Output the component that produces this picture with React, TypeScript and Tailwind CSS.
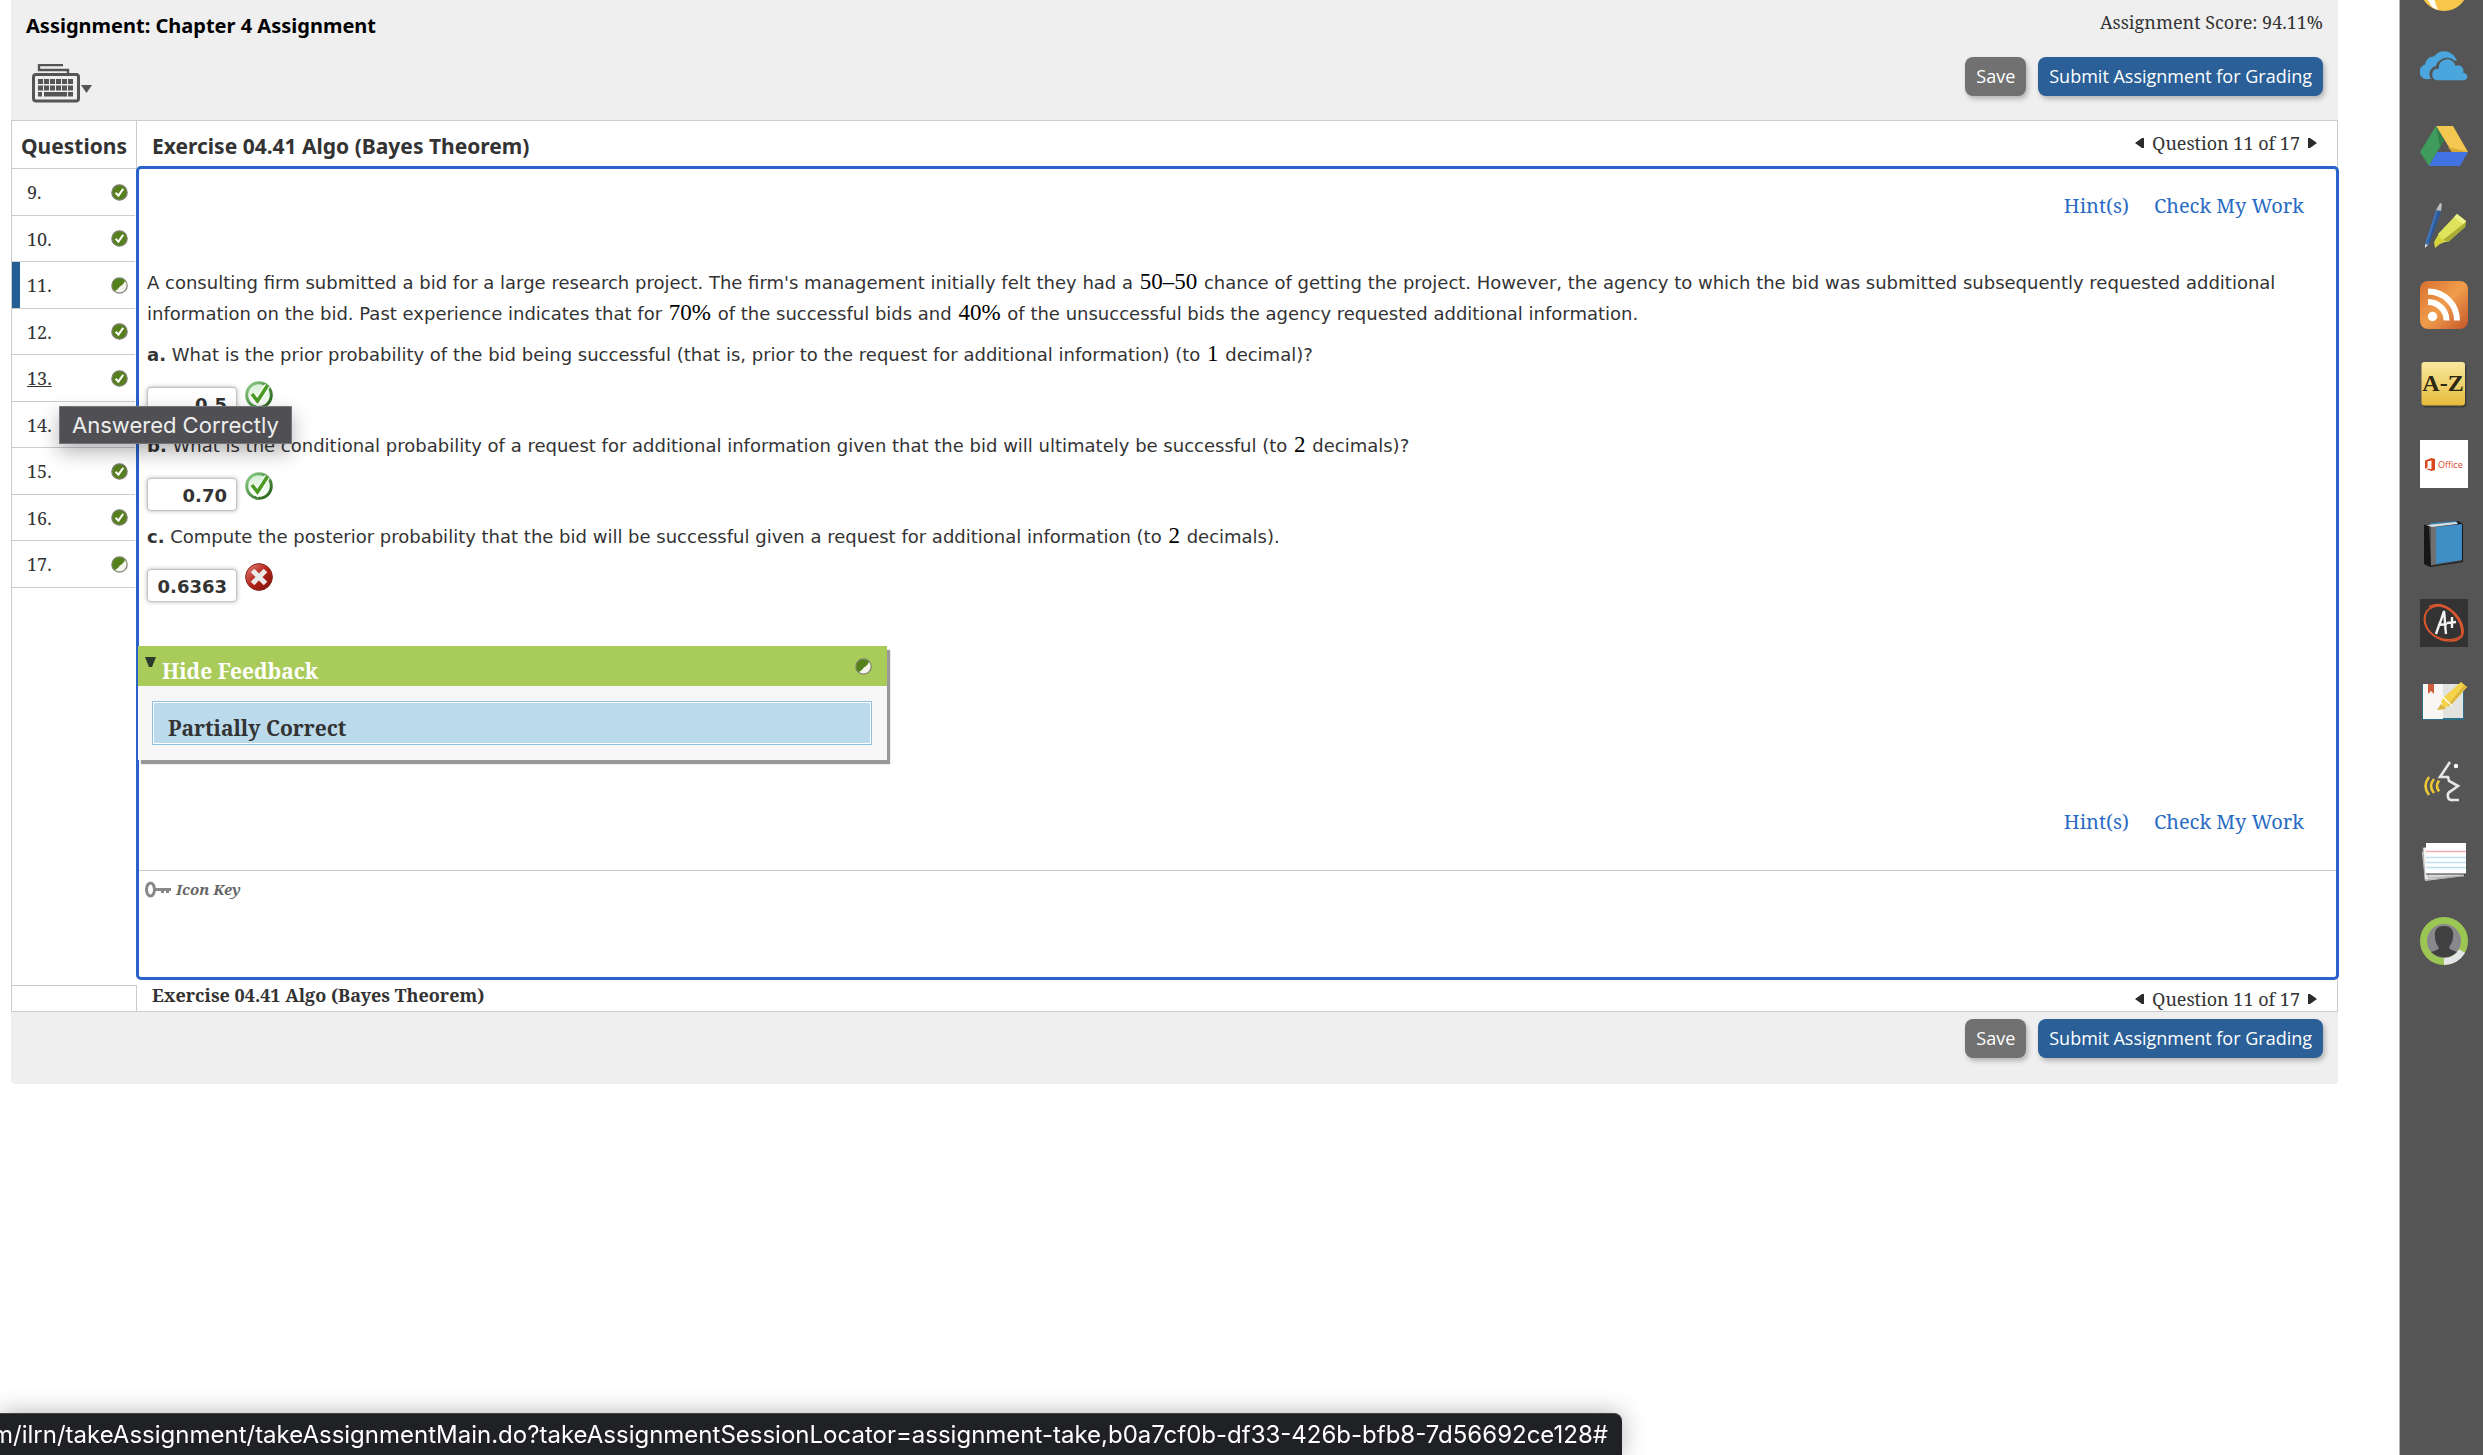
import React, { useState } from "react";

type Status = "correct" | "partial";

interface Question {
  number: number;
  status: Status;
}

const questions: Question[] = [
  { number: 9, status: "correct" },
  { number: 10, status: "correct" },
  { number: 11, status: "partial" },
  { number: 12, status: "correct" },
  { number: 13, status: "correct" },
  { number: 14, status: "correct" },
  { number: 15, status: "correct" },
  { number: 16, status: "correct" },
  { number: 17, status: "partial" },
];

const CURRENT = 11;
const HOVERED = 13;

function StatusIcon({ status }: { status: Status }) {
  return (
    <svg viewBox="0 0 17 17" className="w-[17px] h-[17px] shrink-0">
      <circle cx="8.5" cy="8.5" r="7.7" fill={status === "correct" ? "#55801c" : "#f4f6ee"} stroke="#7d7f72" strokeWidth="1.2" />
      {status === "correct" ? (
        <path d="M4.6 8.8 7.4 11.6 12.2 4.8" fill="none" stroke="#fff" strokeWidth="2" />
      ) : (
        <path d="M3 13.6A7.3 7.3 0 0 1 14 3.6C12.6 8.6 8.6 9 7.8 11 6.4 11.6 4.6 15 3 13.6Z" fill="#55801c" />
      )}
    </svg>
  );
}

function CorrectMark() {
  return (
    <svg viewBox="0 0 28 28" className="w-7 h-7">
      <defs>
        <linearGradient id="ring" x1="0" y1="0" x2="1" y2="1">
          <stop offset="0" stopColor="#8fd08a" />
          <stop offset="1" stopColor="#1d5c10" />
        </linearGradient>
        <linearGradient id="face" x1="0" y1="0" x2="0" y2="1">
          <stop offset="0" stopColor="#d3eed3" />
          <stop offset="1" stopColor="#fff" />
        </linearGradient>
      </defs>
      <circle cx="14" cy="14" r="12.3" fill="url(#face)" stroke="url(#ring)" strokeWidth="3" />
      <path d="M7 13.5 12.5 20.5 22.5 4.5" fill="none" stroke="#fff" strokeWidth="6" />
      <path d="M7 13 12.5 20 22.5 4.5" fill="none" stroke="#4a9a22" strokeWidth="3.6" />
    </svg>
  );
}

function IncorrectMark() {
  return (
    <svg viewBox="0 0 28 28" className="w-7 h-7">
      <defs>
        <linearGradient id="red" x1="0" y1="0" x2="1" y2="1">
          <stop offset="0" stopColor="#e58a80" />
          <stop offset="0.5" stopColor="#b42318" />
          <stop offset="1" stopColor="#7c120c" />
        </linearGradient>
      </defs>
      <circle cx="14" cy="14" r="13.4" fill="url(#red)" stroke="#8d2a22" strokeWidth="1" />
      <path d="M7.5 7.5 20.5 20.5M20.5 7.5 7.5 20.5" stroke="#eceae8" strokeWidth="5" />
    </svg>
  );
}

function KeyboardIcon() {
  return (
    <svg viewBox="0 0 61 39" className="w-[61px] h-[39px]">
      <path d="M31 1H7V6H36V10" fill="none" stroke="#555" strokeWidth="2.4" />
      <rect x="1.5" y="10.5" width="45" height="26.5" rx="2.5" fill="#efefef" stroke="#555" strokeWidth="3" />
      <g fill="#555">
        {[6, 12, 18, 24, 30, 36].map((x) => (
          <rect key={x} x={x} y="15" width="5" height="5" />
        ))}
        {[6, 12, 18, 24, 30, 36].map((x) => (
          <rect key={x} x={x} y="21.5" width="5" height="5" />
        ))}
        <rect x="6" y="28" width="4" height="4.5" />
        <rect x="12" y="28" width="23" height="4.5" />
        <rect x="36" y="28" width="5" height="4.5" />
        <path d="M49 21H60L54.5 29Z" />
      </g>
    </svg>
  );
}

function ActionButtons() {
  return (
    <div className="flex gap-3 font-['Open_Sans',sans-serif] text-lg leading-[39px] text-white">
      <button className="rounded-lg bg-[#717171] px-[11px] shadow-[2px_3px_5px_rgba(0,0,0,0.25)]">Save</button>
      <button className="rounded-lg bg-[#2a5f98] px-[11px] shadow-[2px_3px_5px_rgba(0,0,0,0.25)]">
        Submit Assignment for Grading
      </button>
    </div>
  );
}

function Pager() {
  return (
    <nav className="flex items-center gap-2 pr-5 text-lg leading-6 text-[#333]">
      <button aria-label="Previous question">
        <svg viewBox="0 0 9 10" className="w-[9px] h-[10px]">
          <path d="M9 0V10H7L0 5 7 0Z" fill="#2b2b2b" />
        </svg>
      </button>
      <span>Question 11 of 17</span>
      <button aria-label="Next question">
        <svg viewBox="0 0 9 10" className="w-[9px] h-[10px]">
          <path d="M0 0V10H2L9 5 2 0Z" fill="#2b2b2b" />
        </svg>
      </button>
    </nav>
  );
}

function HintLinks() {
  return (
    <div className="flex justify-end gap-[25px] pr-8 text-xl leading-7 text-[#2a6bc4]">
      <a href="#hints">Hint(s)</a>
      <a href="#check">Check My Work</a>
    </div>
  );
}

function Num({ children }: { children: React.ReactNode }) {
  return (
    <span className="px-px font-['Liberation_Serif',serif] text-[23px] leading-none text-black">{children}</span>
  );
}

interface PartProps {
  letter: string;
  value: string;
  correct: boolean;
  children: React.ReactNode;
}

function Part({ letter, value, correct, children }: PartProps) {
  const [answer, setAnswer] = useState(value);

  return (
    <div className="mt-[10px]">
      <label htmlFor={`part-${letter}`} className="block">
        <b>{letter}.</b> {children}
      </label>
      <div className="mt-[11px] flex items-start gap-2">
        <input
          id={`part-${letter}`}
          value={answer}
          onChange={(e) => setAnswer(e.target.value)}
          className="mt-[6px] h-[33px] w-[90px] rounded-[4px] border border-[#c4c4c4] bg-white pr-[9px] pt-[2px] text-right font-bold shadow-[0_0_4px_rgba(0,0,0,0.3)]"
        />
        {correct ? <CorrectMark /> : <IncorrectMark />}
      </div>
    </div>
  );
}

function Feedback() {
  const [open, setOpen] = useState(true);

  return (
    <section className="-ml-[9px] mt-11 w-[749px] bg-[#f7f7f7] font-['Noto_Serif','DejaVu_Serif_Condensed',serif] text-[21px] font-bold shadow-[3px_4px_1px_#999]">
      <div className="flex h-10 items-center justify-between bg-[#a9cb5a] pl-[7px] pr-[15px]">
        <button onClick={() => setOpen(!open)} className="flex items-start gap-[6px] pt-[10px] leading-8 text-white">
          <svg viewBox="0 0 11 10" className="mt-[2px] w-[11px] h-[10px]">
            <path d="M0 0H11L7 10H4Z" fill="#2b3a2b" />
          </svg>
          {open ? "Hide Feedback" : "Show Feedback"}
        </button>
        <StatusIcon status="partial" />
      </div>
      {open && (
        <div className="p-[15px] pl-[14px]">
          <div className="border border-[#8fc0de] bg-white p-px">
            <p className="h-10 bg-[#bbdaeb] pl-[14px] pt-[9px] leading-8">Partially Correct</p>
          </div>
        </div>
      )}
    </section>
  );
}

const dockIcons: { name: string; art: React.ReactNode }[] = [
  {
    name: "Reader",
    art: (
      <>
        <circle cx="24" cy="24" r="24" fill="#f7c64a" />
        <path d="M3 26C6 36 10 40 12 44L18 47C15 40 13 34 13 26Z" fill="#fff" />
      </>
    ),
  },
  {
    name: "OneDrive",
    art: (
      <g fill="#4ba6de">
        <path d="M9 36A7.5 7.5 0 0 1 5 21.500 8.500 8.500 0 0 1 14 13.500C20 5 33 7 37 18L32 17C25 13 17 17 16 23 9 25 8 32 11 36Z" />
        <path d="M17 38C9 37 10 25 18 25 18 14 33 12 36 22 41 20 45 25 44 29 50 31 49 38 43 38Z" stroke="#555" strokeWidth="1.6" />
      </g>
    ),
  },
  {
    name: "Google Drive",
    art: (
      <>
        <path d="M16 4H33L48 30H32Z" fill="#f4c751" />
        <path d="M16 4 24 18 9 44 0 30Z" fill="#3f9c5c" />
        <path d="M17 30H48L40 44H9Z" fill="#4273e3" />
        <path d="M16 4 24 18 20 25Z" fill="#327f49" />
        <path d="M28 25 48 30H32Z" fill="#d9a935" />
      </>
    ),
  },
  {
    name: "Highlighter",
    art: (
      <>
        <path d="M16 8 21 10 9 42 5 46 6 38Z" fill="#3f72b4" />
        <path d="M18 9 21 10 10 40 8 41Z" fill="#2b5795" />
        <path d="M20 1 22 2 21 9 16 8Z" fill="#b9bcc0" />
        <path d="M5 42 8 43 5 46Z" fill="#ddd" />
        <path d="M37 12 46 19 45 25 28 40 20 40 18 32Z" fill="#dde45c" />
        <path d="M46 20 45 25 28 40 23 38Z" fill="#a9ab35" />
        <path d="M37 12 46 19 43 22 34 15Z" fill="#eef088" />
        <path d="M18 33 25 40 20 42 15 46 14 40Z" fill="#d6d33d" />
      </>
    ),
  },
  {
    name: "RSS",
    art: (
      <>
        <defs>
          <linearGradient id="rss" x1="0" y1="0" x2="1" y2="1">
            <stop offset="0" stopColor="#d9702f" />
            <stop offset="0.5" stopColor="#f09d4b" />
            <stop offset="1" stopColor="#c4552a" />
          </linearGradient>
        </defs>
        <rect width="48" height="48" rx="8" fill="url(#rss)" />
        <circle cx="12.500" cy="35.500" r="4.700" fill="#fff" />
        <path d="M8 21A18.500 18.500 0 0 1 26.500 39.500M8 10.500A29 29 0 0 1 37 39.500" fill="none" stroke="#fff" strokeWidth="6" />
      </>
    ),
  },
  {
    name: "Glossary",
    art: (
      <>
        <defs>
          <linearGradient id="gold" x1="0" y1="0" x2="0" y2="1">
            <stop offset="0" stopColor="#f9e9a0" />
            <stop offset="1" stopColor="#e6bb3c" />
          </linearGradient>
        </defs>
        <rect x="3" y="3" width="43.500" height="43.500" rx="3" fill="#3d3d3d" />
        <rect x="1.500" y="1" width="43.500" height="43.500" rx="3" fill="url(#gold)" />
        <text x="23" y="30" textAnchor="middle" fontFamily="Liberation Serif, serif" fontWeight="bold" fontSize="24" fill="#2b2812">
          A-Z
        </text>
      </>
    ),
  },
  {
    name: "Microsoft Office",
    art: (
      <>
        <rect width="48" height="48" fill="#fff" />
        <path d="M5 20.500 11.500 18 15 19V30L11.500 31 5 28.500 11.500 29V20.500L7.500 21.500V27.500L5 28.500Z" fill="#d8471e" />
        <text x="18" y="28" fontFamily="Open Sans, sans-serif" fontSize="9" fill="#d8471e">
          Office
        </text>
      </>
    ),
  },
  {
    name: "Book",
    art: (
      <>
        <path d="M4 5 38 1 43 4V42L10 47 4 44Z" fill="#171717" />
        <path d="M9 6 42 5V41L11 46Z" fill="#4b4b4b" />
        <path d="M10 3 36 1 38 3 12 7Z" fill="#347fb1" />
        <path d="M6 5 36 2 38 4 12 7Z" fill="#d8dadb" />
        <path d="M16 7 42 4V40L16 44Z" fill="#3f8fc6" />
        <path d="M11 7 16 7V44L11 45Z" fill="#707070" />
      </>
    ),
  },
  {
    name: "Grades",
    art: (
      <>
        <rect width="48" height="48" fill="#333" />
        <path d="M9 8C22 0 41 14 43 32 44 44 25 45 13 36 2 28 1 12 13 8 27 3 43 20 42 36" fill="none" stroke="#d8562f" strokeWidth="1.700" />
        <path d="M10 7C25 3 40 15 43 29 44 41 29 43 17 38 5 32 2 18 8 11" fill="none" stroke="#d8562f" strokeWidth="1.200" />
        <path d="M16 35C19 26 22 19 24 12 25 20 25 27 26 35M18 26 27 25M32 18V29M27 24 36 23" fill="none" stroke="#f3f3f3" strokeWidth="2.400" />
      </>
    ),
  },
  {
    name: "Notebook",
    art: (
      <>
        <rect x="2" y="6" width="42" height="35" rx="1" fill="#2f6d86" />
        <path d="M3 5H23V40H3Z" fill="#f7f6f4" />
        <path d="M23 5H43V39H23Z" fill="#e2e3df" />
        <path d="M8 5H14V15L11 12 8 15Z" fill="#cf5d39" />
        <path d="M41 3 47 8 31 26 24 29 21 23 23 19Z" fill="#f4d24a" />
        <path d="M47 8 31 26 27 27 44 6Z" fill="#dcb93d" />
        <path d="M21 25 26 30 17 31Z" fill="#d9b63a" />
        <path d="M23 18 32 27" stroke="#fff" strokeWidth="1.200" />
      </>
    ),
  },
  {
    name: "ReadSpeaker",
    art: (
      <>
        <path d="M30 4 20 19H28L29 23 38 28 31 33C26 35 27 43 33 42H39" fill="none" stroke="#e6e6e6" strokeWidth="2.600" />
        <circle cx="36" cy="8" r="2.200" fill="#fff" />
        <path d="M9 19Q2 28 9 37M14 21Q8 28 14 35M19 22.500Q15 28 19 33.500" fill="none" stroke="#ecc838" strokeWidth="2.600" />
      </>
    ),
  },
  {
    name: "Flashcards",
    art: (
      <>
        <path d="M2 14 8 12 44 34V38L5 43Z" fill="#d9d9d9" />
        <path d="M3 10 8 9V40L44 38 5 42Z" fill="#f3f3f3" stroke="#999" strokeWidth="0.700" />
        <rect x="6" y="5" width="40" height="31" fill="#fff" />
        <path d="M6 13.500H46" stroke="#f3b1ad" strokeWidth="1.500" />
        <path d="M6 19.500H46M6 24.500H46M6 29.500H46" stroke="#bcdff0" strokeWidth="1.500" />
        <path d="M6 36H46" stroke="#333" />
      </>
    ),
  },
  {
    name: "Profile",
    art: (
      <>
        <circle cx="24" cy="24" r="20.500" fill="#86888b" stroke="#9bc653" strokeWidth="7" />
        <path d="M24 44.500A20.500 20.500 0 0 0 42 34" fill="none" stroke="#e5e6e8" strokeWidth="7" />
        <path d="M24 9C31 9 34 13 33 20 33 25 30 28 29 31 32 34 36 34 37 35 30 42 18 42 11 35 13 34 17 34 19 31 17 28 15 25 15 20 14 13 17 9 24 9Z" fill="#404040" />
      </>
    ),
  },
];

function Dock() {
  return (
    <aside className="w-[84px] shrink-0 overflow-hidden border-l border-[#b5b5b5] bg-[#555] pl-1">
      <div className="-mt-[37px] flex flex-col items-center">
        {dockIcons.map((icon) => (
          <a key={icon.name} href="#app" aria-label={icon.name} className="odd:mb-8 even:mb-[31px]">
            <svg viewBox="0 0 48 48" className="h-12 w-12">
              {icon.art}
            </svg>
          </a>
        ))}
      </div>
    </aside>
  );
}

function QuestionList() {
  return (
    <ol className="grow pr-[2px] text-lg leading-6">
      {questions.map((q) => (
        <li key={q.number} className="relative flex border-b border-[#ccc] odd:h-[47px] even:h-[46px]">
          <a
            href="#question"
            className={`flex grow items-center justify-between border-l-8 pl-[7px] pr-[7px] ${
              q.number === CURRENT ? "border-[#225f95]" : "border-transparent"
            }`}
          >
            <span className={q.number === HOVERED ? "underline" : ""}>{q.number}.</span>
            <StatusIcon status={q.status} />
          </a>
          {q.number === HOVERED && (
            <span
              role="tooltip"
              className="absolute left-[47px] top-[51px] z-10 whitespace-nowrap border border-[#757478] bg-[#504f54] px-3 font-['Inter',sans-serif] text-[22px] leading-9 text-[#eee] shadow-[0_8px_20px_rgba(0,0,0,0.3)]"
            >
              Answered Correctly
            </span>
          )}
        </li>
      ))}
    </ol>
  );
}

export default function App() {
  return (
    <div className="flex min-h-screen bg-white font-['Noto_Serif','DejaVu_Serif_Condensed',serif] text-[#333]">
      <main className="min-w-0 grow pl-[11px] pr-[61px]">
        <header className="flex h-[120px] justify-between bg-[#efefef] pl-[15px] pr-[15px]">
          <div>
            <h1 className="pt-3 font-['Noto_Sans',sans-serif] text-xl font-bold leading-7 text-black">
              Assignment: Chapter 4 Assignment
            </h1>
            <button aria-label="Keyboard shortcuts" className="ml-[6px] mt-6">
              <KeyboardIcon />
            </button>
          </div>
          <div className="flex flex-col items-end">
            <p className="pb-[23px] pt-[10px] text-lg leading-6">Assignment Score: 94.11%</p>
            <ActionButtons />
          </div>
        </header>

        <div className="flex border border-[#ccc]">
          <div className="flex w-[125px] shrink-0 flex-col">
            <h2 className="h-[48px] border-b border-r border-[#ccc] pl-[9px] pt-[10px] font-['Noto_Sans',sans-serif] text-[21px] font-bold leading-[30px]">
              Questions
            </h2>
            <QuestionList />
            <div className="h-[26px] border-r border-t border-[#ccc]" />
          </div>

          <div className="min-w-0 grow">
            <div className="flex h-[45px] items-start justify-between pl-[15px] pt-[10px]">
              <h2 className="font-['Noto_Sans',sans-serif] text-[21px] font-bold leading-[30px]">
                Exercise 04.41 Algo (Bayes Theorem)
              </h2>
              <Pager />
            </div>

            <div className="-ml-px -mr-[2px] min-h-[814px] rounded-[5px] border-[3px] border-[#2a62cb] pt-[23px]">
              <HintLinks />
              <div className="mt-[47px] px-2 font-['DejaVu_Sans',sans-serif] text-lg leading-[31px]">
                <p>
                  A consulting firm submitted a bid for a large research project. The firm's management initially felt
                  they had a <Num>50–50</Num> chance of getting the project. However, the agency to which the bid was
                  submitted subsequently requested additional information on the bid. Past experience indicates that
                  for <Num>70%</Num> of the successful bids and <Num>40%</Num> of the unsuccessful bids the agency
                  requested additional information.
                </p>
                <Part letter="a" value="0.5" correct>
                  What is the prior probability of the bid being successful (that is, prior to the request for
                  additional information) (to <Num>1</Num> decimal)?
                </Part>
                <Part letter="b" value="0.70" correct>
                  What is the conditional probability of a request for additional information given that the bid will
                  ultimately be successful (to <Num>2</Num> decimals)?
                </Part>
                <Part letter="c" value="0.6363" correct={false}>
                  Compute the posterior probability that the bid will be successful given a request for additional
                  information (to <Num>2</Num> decimals).
                </Part>
                <Feedback />
              </div>
              <div className="pb-[34px] pt-12">
                <HintLinks />
              </div>
              <div className="border-t border-[#ccc] px-[6px] pt-2">
                <a href="#icon-key" className="flex items-center gap-[5px] text-[15px] font-bold italic leading-5 text-[#666]">
                  <svg viewBox="0 0 26 17" className="w-[26px] h-[17px]">
                    <ellipse cx="5.500" cy="8.500" rx="4" ry="6.500" fill="none" stroke="#888" strokeWidth="3" />
                    <path d="M9 7H26V10H24V12H21V10H19V12H16V10H9Z" fill="#888" />
                  </svg>
                  Icon Key
                </a>
              </div>
            </div>

            <div className="flex h-[31px] items-start justify-between pl-[15px]">
              <h3 className="pt-[3px] text-lg font-bold leading-6">Exercise 04.41 Algo (Bayes Theorem)</h3>
              <div className="pt-[7px]">
                <Pager />
              </div>
            </div>
          </div>
        </div>

        <footer className="flex h-[72px] items-start justify-end rounded-b bg-[#efefef] pr-[15px] pt-[7px]">
          <ActionButtons />
        </footer>
      </main>
      <Dock />
      <div className="fixed bottom-0 left-0 flex h-[42px] w-[1622px] justify-end overflow-hidden rounded-tr-lg border-t border-[#444] bg-[#202124] pr-[14px] pt-[5px] font-['Inter',sans-serif] text-2xl leading-8 text-white shadow-[0_0_24px_rgba(0,0,0,0.3)]">
        <span className="whitespace-nowrap">
          m/ilrn/takeAssignment/takeAssignmentMain.do?takeAssignmentSessionLocator=assignment-take,b0a7cf0b-df33-426b-bfb8-7d56692ce128#
        </span>
      </div>
    </div>
  );
}
